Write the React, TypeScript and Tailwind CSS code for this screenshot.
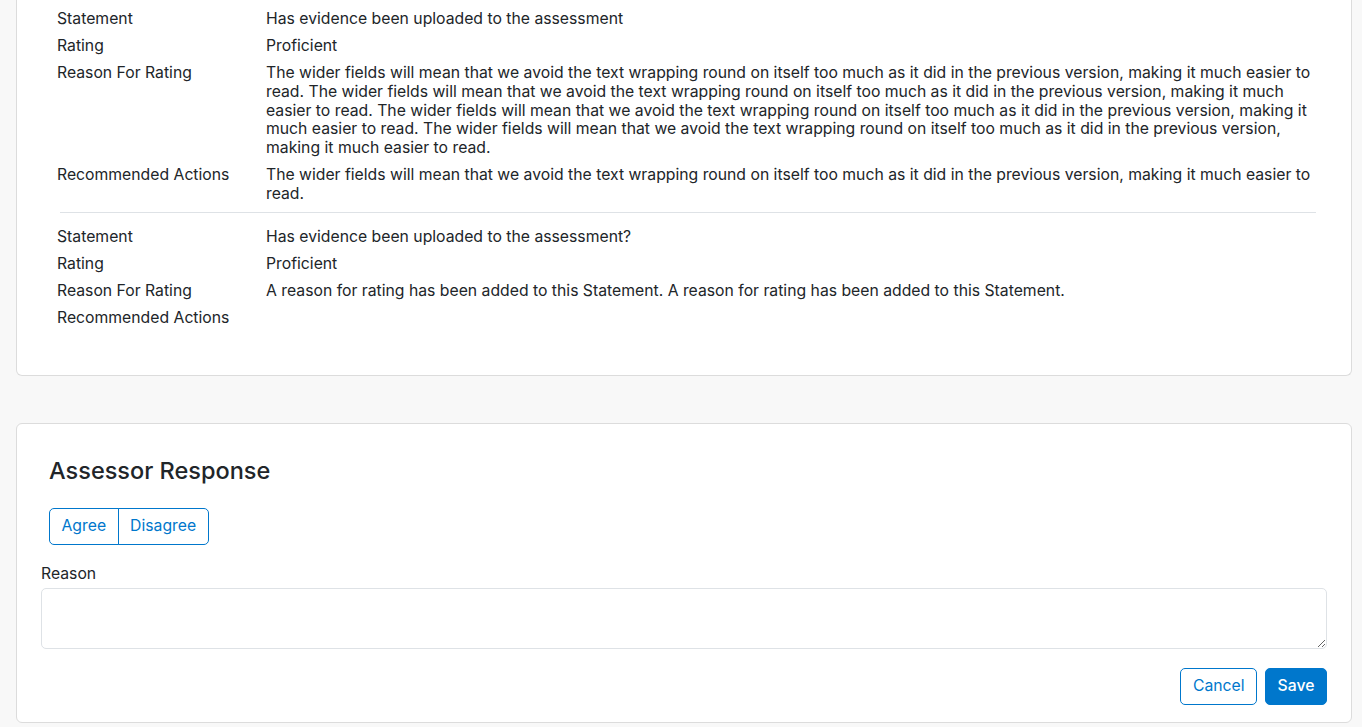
import React from "react";

/* ---- Data ---- */

const LONG_REASON =
  "The wider fields will mean that we avoid the text wrapping round on itself too much as it did in the previous version, making it much easier to read. The wider fields will mean that we avoid the text wrapping round on itself too much as it did in the previous version, making it much easier to read. The wider fields will mean that we avoid the text wrapping round on itself too much as it did in the previous version, making it much easier to read. The wider fields will mean that we avoid the text wrapping round on itself too much as it did in the previous version, making it much easier to read.";

interface StatementEntry {
  statement: string;
  rating: string;
  reason: string;
  actions: string;
}

const STATEMENTS: StatementEntry[] = [
  {
    statement: "Has evidence been uploaded to the assessment",
    rating: "Proficient",
    reason: LONG_REASON,
    actions:
      "The wider fields will mean that we avoid the text wrapping round on itself too much as it did in the previous version, making it much easier to read.",
  },
  {
    statement: "Has evidence been uploaded to the assessment?",
    rating: "Proficient",
    reason:
      "A reason for rating has been added to this Statement. A reason for rating has been added to this Statement.",
    actions: "",
  },
];

/* ---- Pieces ---- */

function DetailRow({ label, value }: { label: string; value: string }) {
  return (
    <div className="flex">
      <div className="w-[209px] shrink-0">{label}</div>
      <div className="min-w-0 flex-1">{value}</div>
    </div>
  );
}

function StatementBlock({ entry }: { entry: StatementEntry }) {
  return (
    <div className="flex flex-col gap-[8.25px]">
      <DetailRow label="Statement" value={entry.statement} />
      <DetailRow label="Rating" value={entry.rating} />
      <DetailRow label="Reason For Rating" value={entry.reason} />
      <DetailRow label="Recommended Actions" value={entry.actions} />
    </div>
  );
}

/* ---- App ---- */

export default function App() {
  return (
    <div
      className="min-h-screen bg-[#f8f8f8] pb-[4px] pl-[16px] pr-[10px] text-[15.75px] leading-[18.75px] text-[#212529]"
      style={{ fontFamily: "Inter, 'Noto Sans', sans-serif" }}
    >
      <div className="rounded-b-[6px] border border-t-0 border-[#dcdcdc] bg-white pb-[48px] pl-[40px] pr-[35px] pt-[10px]">
        <StatementBlock entry={STATEMENTS[0]} />
        <div className="mb-[15px] ml-[3px] mt-[8px] border-t border-[#dee2e6]" />
        <StatementBlock entry={STATEMENTS[1]} />
      </div>

      <div className="mt-[47px] rounded-[6px] border border-[#dcdcdc] bg-white px-[24px] pb-[17px] pt-[33px]">
        <div className="px-[8px]">
          <h2 className="text-[23.5px] font-medium leading-[28px] text-[#212529]">
            Assessor Response
          </h2>
          <div className="mt-[23px] inline-flex">
            <button
              type="button"
              className="h-[37px] rounded-l-[5px] border border-[#0077cc] px-[11.5px] text-[#0077cc]"
            >
              Agree
            </button>
            <button
              type="button"
              className="-ml-px h-[37px] rounded-r-[5px] border border-[#0077cc] px-[11.5px] text-[#0077cc]"
            >
              Disagree
            </button>
          </div>
        </div>
        <label className="mt-[20px] block">Reason</label>
        <textarea className="mt-[4px] block h-[61px] w-full rounded-[5px] border border-[#dee2e6] px-3 py-2 outline-none" />
        <div className="mt-[19px] flex justify-end gap-[8px]">
          <button
            type="button"
            className="h-[37px] rounded-[5px] border border-[#0077cc] px-[11.5px] text-[#0077cc]"
          >
            Cancel
          </button>
          <button
            type="button"
            className="h-[37px] rounded-[5px] border border-[#0077cc] bg-[#0077cc] px-[11.5px] font-medium text-white"
          >
            Save
          </button>
        </div>
      </div>
    </div>
  );
}
